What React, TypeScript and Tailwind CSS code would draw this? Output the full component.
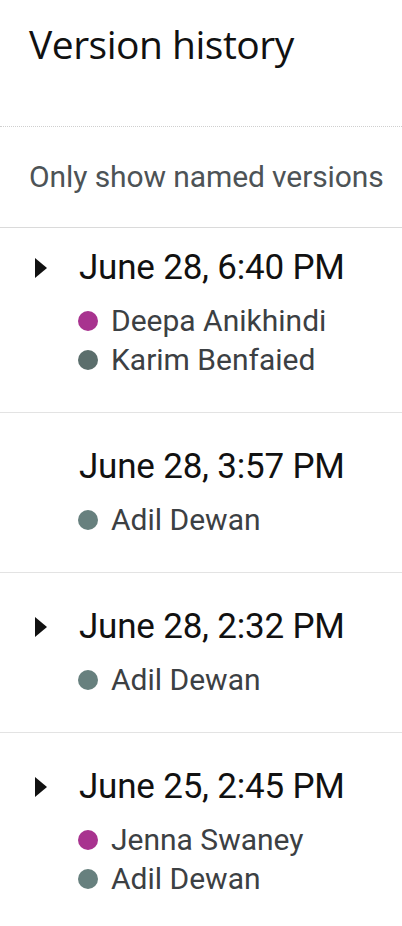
import React from 'react';

type Author = { name: string; color: string };

type Version = {
  date: string;
  expandable: boolean;
  authors: Author[];
};

const MAGENTA = '#a8338f';
const SLATE = '#67807e';

const versions: Version[] = [
  {
    date: 'June 28, 6:40 PM',
    expandable: true,
    authors: [
      { name: 'Deepa Anikhindi', color: MAGENTA },
      { name: 'Karim Benfaied', color: '#5b6e6c' },
    ],
  },
  {
    date: 'June 28, 3:57 PM',
    expandable: false,
    authors: [{ name: 'Adil Dewan', color: SLATE }],
  },
  {
    date: 'June 28, 2:32 PM',
    expandable: true,
    authors: [{ name: 'Adil Dewan', color: SLATE }],
  },
  {
    date: 'June 25, 2:45 PM',
    expandable: true,
    authors: [
      { name: 'Jenna Swaney', color: MAGENTA },
      { name: 'Adil Dewan', color: SLATE },
    ],
  },
];

const Caret: React.FC = () => (
  <svg width="12" height="20" viewBox="0 0 12 20" className="block shrink-0">
    <path d="M0 0 L12 10 L0 20 Z" fill="#111" />
  </svg>
);

const VersionRow: React.FC<{ version: Version; first: boolean }> = ({ version, first }) => (
  <div className={`border-b border-[#e3e3e3] pb-[33px] ${first ? 'pt-[22px]' : 'pt-[36px]'}`}>
    <div className="flex items-center h-[36px]">
      <div className="w-[79px] pl-[35px] flex items-center">
        {version.expandable && <Caret />}
      </div>
      <span className="text-[35px] leading-[36px] text-[#111] tracking-[-0.2px]">{version.date}</span>
    </div>
    <div className="mt-[15px] pl-[78px]">
      {version.authors.map((a, i) => (
        <div key={i} className="flex items-center h-[39px]">
          <span className="w-[20px] h-[20px] rounded-full shrink-0" style={{ backgroundColor: a.color }} />
          <span className="ml-[13px] text-[30px] leading-[39px] text-[#3c4043]">{a.name}</span>
        </div>
      ))}
    </div>
  </div>
);

export default function App() {
  return (
    <div className="w-[402px] h-[926px] bg-white overflow-hidden font-['Roboto',_'Liberation_Sans',_sans-serif]">
      <div className="h-[127px] border-b border-dotted border-[#cfcfcf] pl-[29px] pt-[20px]">
        <h1 className="text-[39px] leading-[48px] text-[#111] font-['Open_Sans',_'Roboto',_sans-serif] tracking-[-0.5px]">
          Version history
        </h1>
      </div>
      <div className="h-[101px] border-b border-[#dadada] pl-[29px] flex items-center">
        <span className="text-[30px] leading-[36px] text-[#4d5356] tracking-[-0.1px]">Only show named versions</span>
      </div>
      {versions.map((v, i) => (
        <VersionRow key={i} version={v} first={i === 0} />
      ))}
    </div>
  );
}
